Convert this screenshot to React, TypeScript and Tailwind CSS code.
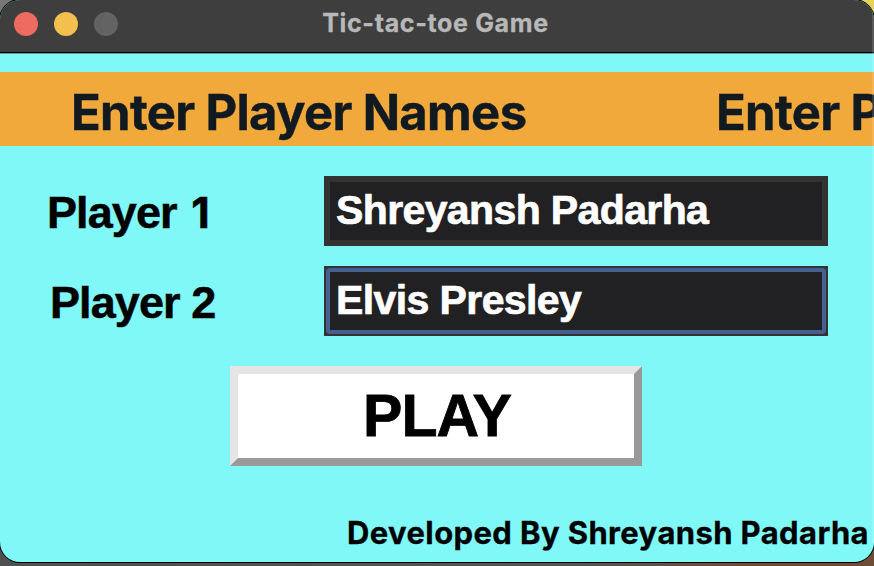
const sans = "font-['Inter','Liberation_Sans',sans-serif]";
const helvetica = "font-['Liberation_Sans',sans-serif]";

function TitleBar() {
  return (
    <header className="relative flex h-[54px] shrink-0 items-start justify-center border-b border-[#5c9c9d] bg-[#3e3e3e] shadow-[inset_0_-1px_0_#000]">
      <div className="absolute left-[14px] top-3 flex gap-4">
        <span className="size-6 rounded-full bg-[#ed6b5f]" />
        <span className="size-6 rounded-full bg-[#f5bf4f]" />
        <span className="size-6 rounded-full bg-[#636363]" />
      </div>
      <h1 className={`${sans} mt-[7px] -ml-[3px] whitespace-nowrap text-[25px] leading-[32px] font-bold tracking-[0.65px] text-[#b8b8b8] [-webkit-text-stroke:0.3px_#b8b8b8]`}>
        Tic-tac-toe Game
      </h1>
    </header>
  );
}

function Marquee() {
  return (
    <div className={`${sans} mt-[18px] flex h-[74px] shrink-0 overflow-hidden bg-[#f1a93b] pl-[71px] text-[49px] leading-[81px] font-bold tracking-[-0.68px] text-[#111921] [-webkit-text-stroke:0.4px_#111921]`}>
      <span className="w-[645px] shrink-0 whitespace-nowrap">Enter Player Names</span>
      <span className="shrink-0 whitespace-nowrap">Enter Player Names</span>
    </div>
  );
}

export default function App() {
  return (
    <div className="relative h-[566px] w-[874px] overflow-hidden bg-[linear-gradient(90deg,#505050_0%,#555_65%,#6e4d35_85%,#6e4d35_100%)]">
      <span className="absolute left-0 top-0 size-6 bg-[#777]" />
      <span className="absolute right-0 top-0 size-6 bg-[#e5d45b]" />
      <main className="relative flex h-[562px] w-full flex-col overflow-hidden rounded-[20px] bg-[#80f8f8] shadow-[0_0_0_1px_#000]">
        <TitleBar />
        <Marquee />
        <form className={`${helvetica} mt-[30px] flex flex-col gap-5 font-bold`}>
          <div className="flex h-[70px]">
            <label htmlFor="p1" className="w-[324px] pl-[47px] text-[45px] leading-[73px] tracking-[-0.9px] text-black [-webkit-text-stroke:0.5px_black]">
              Player <span className={`${sans} ml-[3px] text-[43px]`}>1</span>
            </label>
            <div id="p1" className="w-[504px] border-[6px] border-[#333] bg-[#212123] pl-[6px] text-[41px] leading-[57px] tracking-[-0.62px] whitespace-nowrap text-white [-webkit-text-stroke:0.7px_white]">
              Shreyansh Padarha
            </div>
          </div>
          <div className="flex h-[70px]">
            <label htmlFor="p2" className="w-[324px] pl-[50px] text-[45px] leading-[73px] tracking-[-0.9px] text-black [-webkit-text-stroke:0.5px_black]">Player 2</label>
            <div className="w-[504px] bg-[#333] p-[2px]">
              <div id="p2" className="h-[66px] rounded-[4px] bg-[#44608f] p-1">
                <div className="h-[58px] bg-[#212123] pl-[6px] text-[41px] leading-[57px] tracking-[-0.6px] whitespace-nowrap text-white [-webkit-text-stroke:0.7px_white]">
                  Elvis Presley
                </div>
              </div>
            </div>
          </div>
          <button
            type="button"
            className="mt-[10px] ml-[230px] h-[100px] w-[412px] border-8 border-t-[#e5e5e5] border-r-[#999] border-b-[#999] border-l-[#e5e5e5] bg-white pl-[2px] text-[59px] leading-[84px] tracking-[-1px] text-black [-webkit-text-stroke:0.8px_black]"
          >
            PLAY
          </button>
        </form>
        <footer className={`${sans} mt-[47px] pr-[5px] text-right text-[31px] leading-[40px] font-bold tracking-[0.39px] whitespace-nowrap text-black [-webkit-text-stroke:0.3px_black]`}>
          Developed By Shreyansh Padarha
        </footer>
        <span className="pointer-events-none absolute inset-y-0 right-0 w-[2px] bg-white/15" />
      </main>
    </div>
  );
}
